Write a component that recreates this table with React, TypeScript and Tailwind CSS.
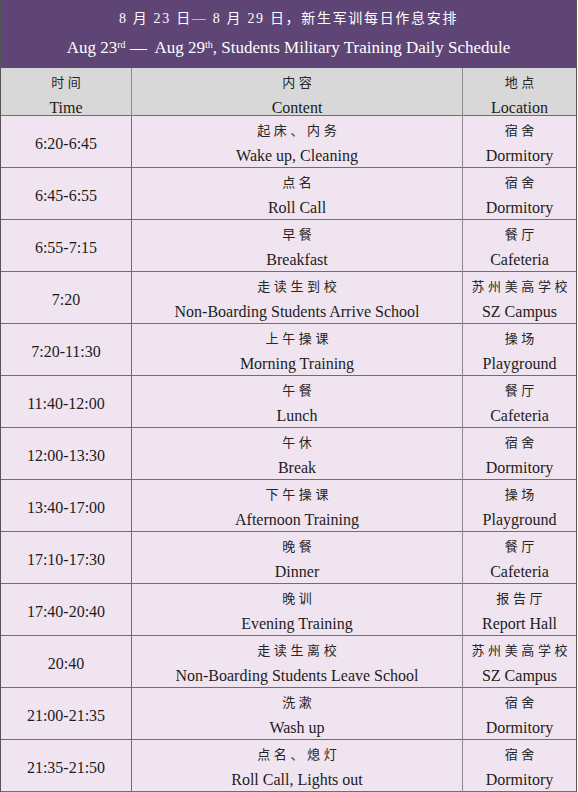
const rows = [
  { time: "6:20-6:45", zh: "起床、内务", en: "Wake up, Cleaning", locZh: "宿舍", locEn: "Dormitory" },
  { time: "6:45-6:55", zh: "点名", en: "Roll Call", locZh: "宿舍", locEn: "Dormitory" },
  { time: "6:55-7:15", zh: "早餐", en: "Breakfast", locZh: "餐厅", locEn: "Cafeteria" },
  { time: "7:20", zh: "走读生到校", en: "Non-Boarding Students Arrive School", locZh: "苏州美高学校", locEn: "SZ Campus" },
  { time: "7:20-11:30", zh: "上午操课", en: "Morning Training", locZh: "操场", locEn: "Playground" },
  { time: "11:40-12:00", zh: "午餐", en: "Lunch", locZh: "餐厅", locEn: "Cafeteria" },
  { time: "12:00-13:30", zh: "午休", en: "Break", locZh: "宿舍", locEn: "Dormitory" },
  { time: "13:40-17:00", zh: "下午操课", en: "Afternoon Training", locZh: "操场", locEn: "Playground" },
  { time: "17:10-17:30", zh: "晚餐", en: "Dinner", locZh: "餐厅", locEn: "Cafeteria" },
  { time: "17:40-20:40", zh: "晚训", en: "Evening Training", locZh: "报告厅", locEn: "Report Hall" },
  { time: "20:40", zh: "走读生离校", en: "Non-Boarding Students Leave School", locZh: "苏州美高学校", locEn: "SZ Campus" },
  { time: "21:00-21:35", zh: "洗漱", en: "Wash up", locZh: "宿舍", locEn: "Dormitory" },
  { time: "21:35-21:50", zh: "点名、熄灯", en: "Roll Call, Lights out", locZh: "宿舍", locEn: "Dormitory" },
]

const serif = "font-['Liberation_Serif','Noto_Sans_CJK_SC',serif]"
const zhText = "text-[13px] tracking-[0.28em] leading-[25px] text-[#262626]"
const enText = "text-[16px] leading-[25px] text-[#1c1c1c]"

function Cell({ zh, en }: { zh: string; en: string }) {
  return (
    <div className="h-full flex flex-col items-center justify-center pt-[2px]">
      <span className={zhText + " pl-[0.28em]"}>{zh}</span>
      <span className={enText}>{en}</span>
    </div>
  )
}

export default function App() {
  return (
    <div className={`w-[578px] h-[792px] bg-white ${serif} overflow-hidden`}>
      <div className="w-[577px] border-l border-r border-[#555]">
        {/* Title */}
        <div className="h-[68px] bg-[#5e4576] flex flex-col items-center justify-center text-white">
          <div className="text-[14px] tracking-[0.12em] leading-[26px] mt-[2px]">
            8 月 23 日— 8 月 29 日，新生军训每日作息安排
          </div>
          <div className="text-[17px] leading-[32px]">
            Aug 23<sup className="text-[10px]">rd</sup> —&nbsp; Aug 29<sup className="text-[10px]">th</sup>, Students Military Training Daily Schedule
          </div>
        </div>

        {/* Column header */}
        <div className="grid grid-cols-[131px_331px_1fr] h-[48px] bg-[#d8d8d8] border-b border-[#6e6e6e]">
          <div className="border-r border-[#8a8a8a]">
            <Cell zh="时间" en="Time" />
          </div>
          <div className="border-r border-[#8a8a8a]">
            <Cell zh="内容" en="Content" />
          </div>
          <Cell zh="地点" en="Location" />
        </div>

        {/* Body */}
        {rows.map((r) => (
          <div key={r.time + r.en} className="grid grid-cols-[131px_331px_1fr] h-[52px] bg-[#f0e4f0] border-b border-[#6e6e6e]">
            <div className="border-r border-[#6e6e6e] flex items-center justify-center pt-[2px]">
              <span className={enText}>{r.time}</span>
            </div>
            <div className="border-r border-[#8a8a8a]">
              <Cell zh={r.zh} en={r.en} />
            </div>
            <Cell zh={r.locZh} en={r.locEn} />
          </div>
        ))}
      </div>
    </div>
  )
}
